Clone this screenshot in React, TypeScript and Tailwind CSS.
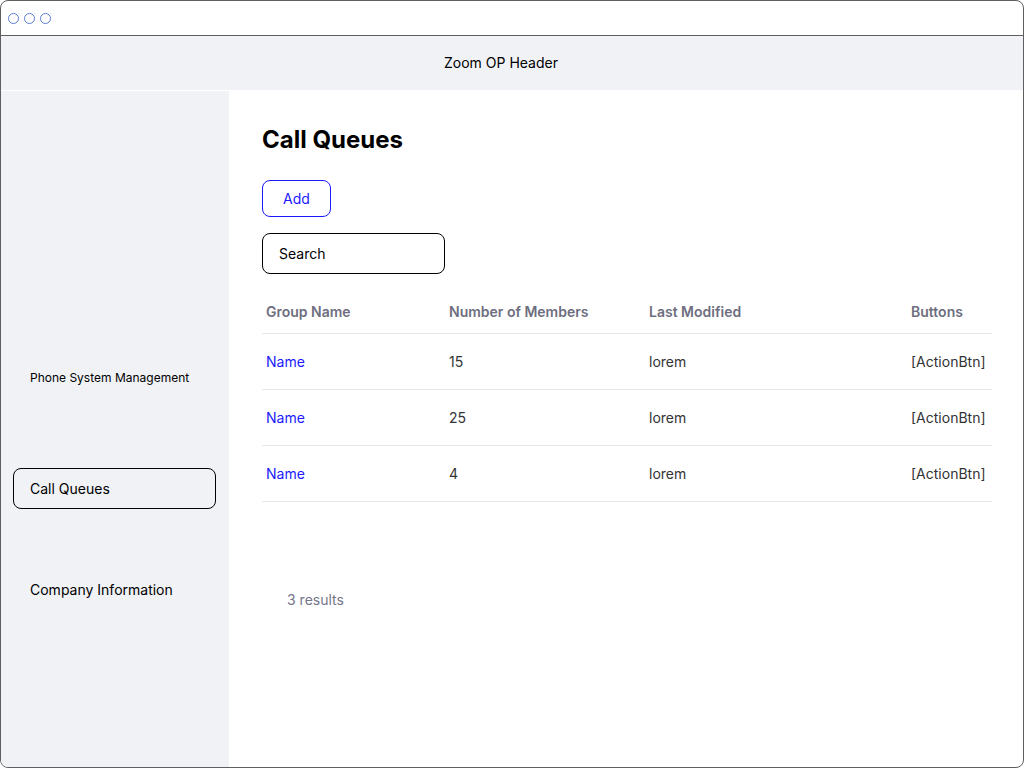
import { useState } from "react"

const rows = [
  { name: "Name", members: 15, modified: "lorem" },
  { name: "Name", members: 25, modified: "lorem" },
  { name: "Name", members: 4, modified: "lorem" },
]

const cols = "grid grid-cols-[183px_200px_262px_85px]"

export default function App() {
  const [query, setQuery] = useState("")

  return (
    <div className="h-[768px] w-[1024px] font-['Inter',sans-serif] bg-white">
      <div className="flex h-full flex-col overflow-hidden rounded-lg border border-[#5f5f5f]">
        {/* window chrome */}
        <div className="flex h-[35px] shrink-0 items-center gap-[5px] border-b border-[#5f5f5f] pl-[7px]">
          <span className="h-[11px] w-[11px] rounded-full border-[1.5px] border-[#5a7cd2]" />
          <span className="h-[11px] w-[11px] rounded-full border-[1.5px] border-[#5a7cd2]" />
          <span className="h-[11px] w-[11px] rounded-full border-[1.5px] border-[#5a7cd2]" />
        </div>

        <header className="flex h-[55px] shrink-0 items-center justify-center border-b border-white bg-[#f1f2f6] pr-[22px] text-sm text-black">
          Zoom OP Header
        </header>

        <div className="flex min-h-0 flex-1">
          {/* sidebar */}
          <aside className="flex w-[228px] shrink-0 flex-col bg-[#f1f2f6] pt-[279px] text-black">
            <div className="pl-[29px] text-xs leading-4">Phone System Management</div>
            <button className="ml-3 mt-[82px] h-[41px] w-[203px] rounded-lg border border-black pl-4 text-left text-sm">
              Call Queues
            </button>
            <div className="mt-[71px] pl-[29px] text-sm leading-5">Company Information</div>
          </aside>

          {/* main */}
          <main className="flex-1 pl-[33px] pt-[33px]">
            <h1 className="text-2xl font-bold leading-8 text-black">Call Queues</h1>
            <button className="mt-6 h-[37px] w-[69px] rounded-lg border border-[#1a1aff] text-sm text-[#1a1aff]">
              Add
            </button>
            <div className="mt-4">
              <input
                value={query}
                onChange={e => setQuery(e.target.value)}
                placeholder="Search"
                className="h-[41px] w-[183px] rounded-lg border border-black px-4 text-sm text-black outline-none placeholder:text-black"
              />
            </div>

            <div className="mt-4 w-[730px] text-sm">
              <div className={`${cols} h-11 items-center border-b border-[#e8e8ec] font-semibold text-[#6e6e80]`}>
                <div className="px-1">Group Name</div>
                <div className="px-1">Number of Members</div>
                <div className="px-1">Last Modified</div>
                <div className="px-1">Buttons</div>
              </div>
              {rows.map((row, i) => (
                <div key={i} className={`${cols} h-14 items-center border-b border-[#e8e8ec] text-[#333]`}>
                  <div className="px-1 text-[#1a1aff]">{row.name}</div>
                  <div className="px-1">{row.members}</div>
                  <div className="px-1">{row.modified}</div>
                  <div className="px-1 whitespace-nowrap">[ActionBtn]</div>
                </div>
              ))}
            </div>

            <div className="mt-[88px] pl-[25px] text-sm text-[#75758a]">{rows.length} results</div>
          </main>
        </div>
      </div>
    </div>
  )
}
